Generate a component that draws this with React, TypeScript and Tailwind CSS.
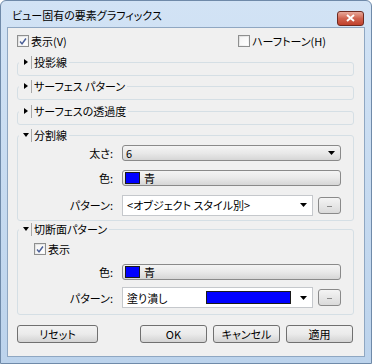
import React from 'react';

const Check = ({ checked }: { checked: boolean }) => (
  <span className="w-[12px] h-[12px] border border-[#8e8f8f] bg-gradient-to-br from-[#dcdcdc] to-[#fbfbfb] flex items-center justify-center shrink-0">
    <span className="w-[8px] h-[8px] bg-gradient-to-br from-[#f4f4f4] to-white flex items-center justify-center">
      {checked && (
        <svg width="9" height="9" viewBox="0 0 9 9">
          <path d="M1.2 4.6 L3.4 7.2 L7.8 1.2" fill="none" stroke="#4a5f97" strokeWidth="1.7" />
        </svg>
      )}
    </span>
  </span>
);

const DownArrow = () => (
  <svg width="7" height="4" viewBox="0 0 7 4" className="shrink-0">
    <path d="M0 0 H7 L3.5 4 Z" fill="#000" />
  </svg>
);

const Legend = ({ label, open }: { label: string; open: boolean }) => (
  <legend className="ml-[1px] px-[2px] h-[14px] leading-[14px] flex items-center">
    <span className="w-[9px] flex items-center justify-center">
      {open ? (
        <svg width="6" height="4" viewBox="0 0 6 4">
          <path d="M0 0 H6 L3 4 Z" fill="#000" />
        </svg>
      ) : (
        <svg width="4" height="6" viewBox="0 0 4 6">
          <path d="M0 0 V6 L4 3 Z" fill="#000" />
        </svg>
      )}
    </span>
    <span className="w-px h-[13px] bg-[#a8a8a8] ml-[1px] mr-[2px]" />
    <span>{label}</span>
  </legend>
);

const Collapsed = ({ label, extra = '' }: { label: string; extra?: string }) => (
  <fieldset className={`border border-[#d5dfe5] rounded-[3px] ${extra}`}>
    <Legend label={label} open={false} />
    <div className="h-[6px]" />
  </fieldset>
);

const ColorButton = () => (
  <div className="flex-1 h-[16px] flex items-center rounded-[3px] border border-[#8a8a8a] bg-gradient-to-b from-[#f4f4f4] via-[#e9e9e9] to-[#d6d6d6] pl-[2px]">
    <span className="w-[15px] h-[12px] bg-[#0000ff] border border-[#1a1a1a]" />
    <span className="ml-[4px]">青</span>
  </div>
);

const DotsButton = () => (
  <div className="w-[23px] h-[17px] rounded-[3px] border border-[#8a8a8a] bg-gradient-to-b from-[#f4f4f4] to-[#dadada] flex items-center justify-center">
    <span className="w-[5px] h-px bg-[#8a8a8a] mt-[2px]" />
  </div>
);

const Label = ({ text }: { text: string }) => (
  <span className="w-[95px] text-right shrink-0">{text}</span>
);

const Button = ({ text, w }: { text: string; w: string }) => (
  <div className={`${w} h-[18px] rounded-[3px] border border-[#707070] bg-gradient-to-b from-[#f2f2f2] via-[#ebebeb] to-[#d3d3d3] flex items-center justify-center`}>
    {text}
  </div>
);

export default function App() {
  return (
    <div className="w-[372px] h-[364px] bg-gradient-to-b from-[#d2e3f5] to-[#bcd3ec] border border-[#6f8aa9] rounded-t-[6px] flex flex-col text-[11px] text-black font-['Noto_Sans_CJK_JP','Noto_Sans',sans-serif] [font-feature-settings:'palt'] leading-[14px]">
      <div className="h-[26px] flex items-center pl-[11px] pr-[7px] shrink-0">
        <span className="text-[11px] mt-[2px]">ビュー固有の要素グラフィックス</span>
        <div className="ml-auto mt-[8px] w-[27px] h-[15px] rounded-[3px] border border-[#6e2a20] bg-gradient-to-b from-[#e8a99b] via-[#d0634f] to-[#c0402c] flex items-center justify-center">
          <svg width="9" height="8" viewBox="0 0 9 8">
            <path d="M1 1 L8 7 M8 1 L1 7" stroke="#fff" strokeWidth="2" />
          </svg>
        </div>
      </div>
      <div className="mx-[6px] h-[330px] bg-[#f0f0f0] border border-[#8fa7c2] pl-[9px] pr-[10px] pt-[6px] flex flex-col">
        <div className="flex items-center h-[14px]">
          <Check checked />
          <span className="ml-[2px]">表示(V)</span>
          <div className="ml-auto mr-[28px] flex items-center">
            <Check checked={false} />
            <span className="ml-[2px]">ハーフトーン(H)</span>
          </div>
        </div>
        <div className="mt-[7px] flex flex-col gap-[3px]">
          <Collapsed label="投影線" />
          <Collapsed label="サーフェス パターン" />
          <Collapsed label="サーフェスの透過度" extra="mt-[1px]" />
          <fieldset className="border border-[#d5dfe5] rounded-[3px] pr-[12px] pt-[3px] pb-[5px]">
            <Legend label="分割線" open />
            <div className="flex items-center h-[16px]">
              <Label text="太さ:" />
              <div className="ml-[9px] flex-1 h-[16px] flex items-center rounded-[3px] border border-[#8a8a8a] bg-gradient-to-b from-[#f4f4f4] via-[#e9e9e9] to-[#d6d6d6] pl-[3px] pr-[5px]">
                <span>6</span>
                <span className="ml-auto"><DownArrow /></span>
              </div>
            </div>
            <div className="flex items-center h-[16px] mt-[9px]">
              <Label text="色:" />
              <div className="ml-[9px] flex-1 flex">
                <ColorButton />
              </div>
            </div>
            <div className="flex items-center h-[20px] mt-[9px]">
              <Label text="パターン:" />
              <div className="ml-[9px] flex-1 h-[21px] flex items-center bg-white border border-[#c5c8cc] pl-[4px] pr-[5px]">
                <span>&lt;オブジェクト スタイル別&gt;</span>
                <span className="ml-auto"><DownArrow /></span>
              </div>
              <div className="ml-[5px]"><DotsButton /></div>
            </div>
          </fieldset>
          <fieldset className="border border-[#d5dfe5] rounded-[3px] pr-[12px] pt-[7px] pb-[6px] -mt-[2px]">
            <Legend label="切断面パターン" open />
            <div className="flex items-center h-[12px] pl-[16px]">
              <Check checked />
              <span className="ml-[2px]">表示</span>
            </div>
            <div className="flex items-center h-[16px] mt-[9px]">
              <Label text="色:" />
              <div className="ml-[9px] flex-1 flex">
                <ColorButton />
              </div>
            </div>
            <div className="flex items-center h-[21px] mt-[7px]">
              <Label text="パターン:" />
              <div className="ml-[9px] flex-1 h-[21px] flex items-center bg-white border border-[#c5c8cc] pl-[4px] pr-[5px]">
                <span>塗り潰し</span>
                <span className="ml-auto mr-[9px] w-[85px] h-[13px] bg-[#0000ff] border border-[#1a1a1a]" />
                <DownArrow />
              </div>
              <div className="ml-[5px]"><DotsButton /></div>
            </div>
          </fieldset>
        </div>
        <div className="mt-[10px] flex items-center">
          <Button text="リセット" w="w-[81px]" />
          <div className="ml-auto flex gap-[6px] mr-[1px]">
            <Button text="OK" w="w-[67px]" />
            <Button text="キャンセル" w="w-[67px]" />
            <Button text="適用" w="w-[67px]" />
          </div>
        </div>
      </div>
    </div>
  );
}
